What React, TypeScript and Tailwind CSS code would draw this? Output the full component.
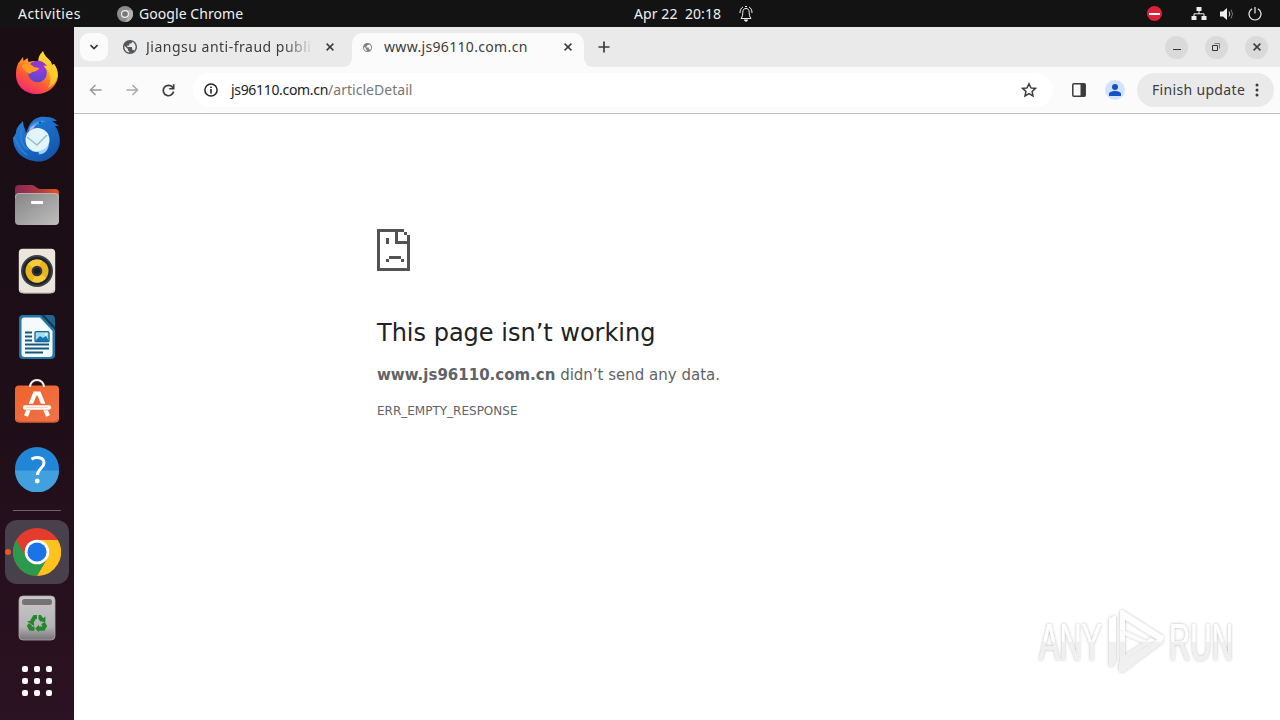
import type { ReactNode } from "react";

const Globe = ({ size }: { size: number }) => (
  <svg width={size} height={size} viewBox="2 2 20 20" fill="#54575a">
    <path d="M12 2C6.48 2 2 6.48 2 12s4.48 10 10 10 10-4.48 10-10S17.52 2 12 2ZM4 12c0-.6.07-1.200.2-1.800L9 15v1c0 1.100.9 2 2 2v1.930C7.060 19.440 4 16.080 4 12Zm13.890 5.400c-.26-.81-1-1.400-1.900-1.400h-1v-3c0-.55-.45-1-1-1h-6v-2h2c.55 0 1-.45 1-1V7h2c1.100 0 2-.9 2-2v-.41C17.920 5.770 20 8.650 20 12c0 2.080-.8 3.970-2.110 5.400Z" />
    <path d="M4.300 9 8 6l4-3 3 1.500L13 7h-2v3H8.500v2H14l1.500 4-3.500 1-5-4Z" opacity=".25" />
  </svg>
);

const Cross = ({ size = 8 }: { size?: number }) => (
  <svg width={size} height={size} viewBox="0 0 8 8"><path d="m.6.6 6.8 6.8M7.4.6.6 7.4" stroke="#3c3c3c" strokeWidth="1.5" /></svg>
);

const Slot = ({ children }: { children: ReactNode }) => (
  <div className="flex h-16 w-16 shrink-0 items-center justify-center">{children}</div>
);

const Firefox = () => (
  <svg width="48" height="48" viewBox="0 0 48 48">
    <defs>
      <linearGradient id="ff1" x1=".85" y1="0" x2=".25" y2="1"><stop stopColor="#fff044" /><stop offset=".35" stopColor="#ffb01f" /><stop offset=".65" stopColor="#ff602e" /><stop offset="1" stopColor="#f52478" /></linearGradient>
      <radialGradient id="ff2" cx=".6" cy=".2" r=".8"><stop stopColor="#a139df" /><stop offset="1" stopColor="#5648cf" /></radialGradient>
    </defs>
    <path d="M7 12 10 8l.5 4 4-3 1 4 5-1 5 0C25 6 29 4 30 2c1 5 5 7 8 11l1 3 2-1c3 4 4 8 4 12C44 38 34 45 24 45 12 45 3 37 3 26c0-6 1-11 4-14Z" fill="url(#ff1)" />
    <path d="M30 2c1 5 5 7 8 11l1 3 2-1c3 4 4 8 3 14-2 5-5 8-9 10 4-7 3-16-3-21-3-3-6-4-6.500-7C26 7 29 4 30 2Z" fill="#ffd52f" opacity=".75" />
    <circle cx="24.500" cy="24" r="9.300" fill="url(#ff2)" />
    <path d="M17 15c5-5 13-4 17 2-4-1-7 0-10 3Z" fill="#9237cd" />
    <path d="M9 16c5-2 9-1 12 2l5 1c-1 4-7 3-9 6-3-2-8-4-8-9Z" fill="#ff9b25" />
  </svg>
);

const Thunderbird = () => (
  <svg width="50" height="50" viewBox="0 0 50 50">
    <defs><linearGradient id="tb" x1="0" y1="0" x2=".7" y2="1"><stop stopColor="#2a85df" /><stop offset=".6" stopColor="#1769c4" /><stop offset="1" stopColor="#1554ab" /></linearGradient></defs>
    <path d="M17 12C21 4 28 2 34 3c6 0 9 2 11 4l-5 0 7 5-4 0c5 7 7 17 2 25C39 46 29 49 22 47 8 45 1 35 1 24l3-5c0-5 3-8 7-12 0 5 2 7 3 12Z" fill="url(#tb)" />
    <path d="M17 14c4-6 10-8 17-7-7 2-14 6-17 12Z" fill="#3d98e7" />
    <path d="M2 23c3 5 5 13 13 18M10 14c-3 9 0 18 6 22" fill="none" stroke="#2b7ed2" strokeWidth="2" />
    <circle cx="25.500" cy="26" r="12" fill="#e3f5fc" />
    <path d="m15 23 10 8 10-10" fill="none" stroke="#98bdcd" strokeWidth="1.600" />
    <path d="M21 37c8 1 14-2 16-7-1 8-6 11-11 10 3-1 1-2-5-3" fill="#9bd5f7" />
    <path d="m17 17 2-4 5-3-3 5Z" fill="#c5aae8" /><circle cx="28" cy="8.500" r="1.100" fill="#123b7b" />
  </svg>
);

const Files = () => (
  <svg width="46" height="42" viewBox="0 0 46 42">
    <defs>
      <linearGradient id="fl1"><stop stopColor="#872851" /><stop offset=".5" stopColor="#a93744" /><stop offset="1" stopColor="#e95420" /></linearGradient>
      <linearGradient id="fl2" x1="0" y1="0" x2="1" y2="1"><stop stopColor="#858585" /><stop offset="1" stopColor="#bebebe" /></linearGradient>
    </defs>
    <path d="M1 15V5q0-4 4-4h13q2 0 4 2t4 2h15q4 0 4 4v9Z" fill="url(#fl1)" />
    <rect x="1" y="9" width="44" height="32" rx="4" fill="url(#fl2)" />
    <path d="M1.500 14q0-4.500 4-4.500h35q4 0 4 4.500" fill="none" stroke="#bcbcbc" strokeWidth=".8" />
    <rect x="17" y="17" width="12" height="3" rx=".7" fill="#fff" />
  </svg>
);

const Rhythmbox = () => (
  <svg width="38" height="46" viewBox="0 0 38 46">
    <rect x=".8" y=".8" width="36.400" height="44.400" rx="4" fill="#eae6dc" /><path d="M2 42q1 3 4 3h26q3 0 4-3" fill="none" stroke="#bdb8ac" />
    <circle cx="19" cy="23" r="16" fill="#3b3f46" /><circle cx="19" cy="23" r="14" fill="#1f242b" />
    <circle cx="19" cy="23" r="11.500" fill="#e9b51d" /><path d="M19 23 10 16a11.500 11.500 0 0 1 14-3.500ZM19 23l9 7a11.500 11.500 0 0 1-14 3.500Z" fill="#f5cb37" />
    <circle cx="19" cy="23" r="5.300" fill="#30363e" /><circle cx="19" cy="23" r="3" fill="#171d23" />
  </svg>
);

const Writer = () => (
  <svg width="38" height="46" viewBox="0 0 38 46">
    <path d="M5 1h20l12 12v28q0 4-4 4H5q-4 0-4-4V5q0-4 4-4" fill="#1f78a5" />
    <path d="M6 3.500h16L34.500 17v23q0 3-3 3H6.500q-3 0-3-3V6.500q0-3 2.500-3" fill="#f5fafd" />
    <path d="M25 1h8q4 0 4 4v8Z" fill="#226591" /><path d="M23 1 37 16v-3L26 1Z" fill="#103a54" />
    <path d="M7 18.500h7M7 22.500h7M7 26.500h7M7 30.500h24M7 34.500h24M7 38.500h18" stroke="#14597d" strokeWidth="1.800" />
    <rect x="17" y="17.700" width="14" height="10" rx="1" fill="#a8dcf5" stroke="#14658f" strokeWidth="1.300" /><path d="m18 26 4-4 3 2 3-2 2.500 4v1H18Z" fill="#1577b2" /><circle cx="28" cy="20.400" r="1" fill="#fff" />
  </svg>
);

const Software = () => (
  <svg width="46" height="46" viewBox="0 0 46 46">
    <defs><linearGradient id="sw" x1="0" y1="0" x2="1" y2="1"><stop stopColor="#f0622d" /><stop offset="1" stopColor="#ee7448" /></linearGradient></defs>
    <rect x="1" y="7.500" width="44" height="37" rx="4" fill="url(#sw)" /><path d="M2 41q1 3 4 3h34q3 0 4-3" stroke="#c95832" fill="none" />
    <path d="M16 9a7 7 0 0 1 14 0" fill="none" stroke="#fff1e9" strokeWidth="2" />
    <path d="M12 38 21 15.500h4L34 38" fill="none" stroke="#fff" strokeWidth="4.200" />
    <path d="M12 29h22" stroke="#f0693a" strokeWidth="6.500" /><path d="M11 29.500h24" stroke="#fff" strokeWidth="4.300" strokeLinecap="round" />
    <path d="M12 29.300h22" stroke="#f3b69d" strokeWidth=".7" />
  </svg>
);

const Help = () => (
  <svg width="46" height="46" viewBox="0 0 46 46">
    <circle cx="23" cy="23" r="22" fill="#2186d5" /><path d="M1 24.500h44A22 22 0 0 1 1 24.500" fill="#42a0df" />
    <path d="M17.500 13.200c4-2.600 12.500-2.600 12.500 3.800 0 5-6.600 5.700-6.600 12" fill="none" stroke="#fff" strokeWidth="3" /><circle cx="23.200" cy="35" r="2.400" fill="#fff" />
  </svg>
);

const Chrome = () => (
  <svg width="48" height="48" viewBox="0 0 48 48">
    <circle cx="24" cy="24" r="24" fill="#e33b2e" />
    <path d="M24 12h20.800A24 24 0 0 1 24 48l10.400-18Z" fill="#fcc31e" />
    <path d="M3.200 12A24 24 0 0 0 24 48l10.400-18A12 12 0 0 1 13.600 30Z" fill="#2b9a4b" />
    <circle cx="24" cy="24" r="12.300" fill="#fff" /><circle cx="24" cy="24" r="9.600" fill="#1a73e8" />
  </svg>
);

const Trash = () => (
  <svg width="38" height="46" viewBox="0 0 38 46">
    <defs><linearGradient id="tr" x1="0" y1="0" x2="0" y2="1"><stop stopColor="#c9c8c9" /><stop offset=".7" stopColor="#b5b3b5" /><stop offset="1" stopColor="#777378" /></linearGradient></defs>
    <rect x="1" y="1" width="36" height="44" rx="4" fill="url(#tr)" stroke="#aaa7aa" strokeWidth=".8" />
    <rect x="4" y="4" width="30" height="6" rx="2.500" fill="#757376" />
    <g fill="none" stroke="#26862e" strokeWidth="4.200"><path d="m14 26.500 2.700-4.500h2.300" /><path d="M20.500 22h1.300l2.400 3.500" /><path d="m25 28 1.700 3-1.500 2.700H21" /><path d="M16.500 33.700h-3.800L11.300 31l1-1.800" /></g>
    <path d="m27.500 21.500-.2 6-5.800-1.800ZM21 29.800v7.400l-3.800-3.600ZM9 26.500l6.800-1.500.3 6Z" fill="#26862e" />
  </svg>
);

const Dock = () => (
  <nav className="flex w-[74px] shrink-0 flex-col items-center bg-linear-to-b from-[#1a0d13] via-[#1d0e17] to-[#2c1222] pt-3.5">
    <div className="flex flex-col gap-0.5">
      <Slot><div className="pb-px"><Firefox /></div></Slot><Slot><Thunderbird /></Slot><Slot><Files /></Slot><Slot><Rhythmbox /></Slot><Slot><Writer /></Slot>
      <Slot><div className="pb-1"><Software /></div></Slot><Slot><div className="pb-px"><Help /></div></Slot>
    </div>
    <div className="mt-[9px] h-px w-12 bg-[#6b6068]" />
    <div className="relative mt-[9px] rounded-xl bg-[#48404a]">
      <Slot><Chrome /></Slot>
      <i className="absolute top-[29px] left-0 h-1.5 w-1.5 rounded-full bg-[#ea542a]" />
    </div>
    <div className="mt-0.5"><Slot><Trash /></Slot></div>
    <div className="mt-4 grid grid-cols-3 gap-1.5">
      {Array.from({ length: 9 }, (_, i) => <i key={i} className="h-1.5 w-1.5 rounded-[2px] bg-white" />)}
    </div>
  </nav>
);

const TopBar = () => (
  <header className="flex h-[27px] shrink-0 items-center bg-[#131313] text-[14px] leading-none text-[#f0f0f0]">
    <span className="ml-[18px] w-[99px] tracking-[0.45px]">Activities</span>
    <svg width="16" height="16" viewBox="0 0 16 16"><circle cx="8" cy="8" r="8" fill="#8c8c8c" /><path d="M8 4h7a8 8 0 0 1-7 12l4-6Z" fill="#b0b0b0" /><circle cx="8" cy="8" r="4" fill="#efefef" /><circle cx="8" cy="8" r="2.800" fill="#777" /></svg>
    <span className="ml-1.5 w-[495px] tracking-[0.06px]">Google Chrome</span>
    <span className="w-[104px] tracking-[0.08px] whitespace-pre">Apr 22  20:18</span>
    <svg width="16" height="18" viewBox="0 0 16 18" fill="none" stroke="#f1f1f1" strokeWidth="1"><path d="M3 13.500h10c-1.800-2-1.500-4-1.800-6.300C11 4.200 9.800 3.500 8 3.500S5 4.200 4.800 7.200C4.500 9.500 4.800 11.500 3 13.500Z" /><path d="M2 8c0-3 1-5 3-6M14 8c0-3-1-5-3-6M7 1.500h2" /><path d="M6.300 15h3.400L8 16.500Z" fill="#fff" /></svg>
    <div className="ml-auto mr-[18px] flex items-center">
      <span className="mr-[29px] flex h-[15px] w-[15px] items-center justify-center rounded-full bg-[#e01f38]"><i className="h-[2px] w-[11px] bg-white" /></span>
      <svg width="16" height="14" viewBox="0 0 16 14" fill="#eee"><path d="M5.500 0h5v4h-5ZM.5 9h5v4h-5ZM10.500 9h5v4h-5Z" /><path d="M8 4v3M3 9V6.800h10V9" fill="none" stroke="#eee" /></svg>
      <svg className="ml-[13px]" width="15" height="14" viewBox="0 0 15 14" fill="none"><path d="M0 4.500h3L7 1v12L3 9.500H0Z" fill="#eee" /><path d="M9 4.500q1.600 2.500 0 5" stroke="#ddd" /><path d="M11 2.500q3 4.500 0 9" stroke="#777" /></svg>
      <svg className="ml-[13px]" width="14" height="14" viewBox="0 0 14 14" fill="none" stroke="#eee" strokeWidth="1.200"><path d="M4.200 1.700a6 6 0 1 0 5.600 0M7 0v6.500" /></svg>
    </div>
  </header>
);

const Round = ({ children }: { children: ReactNode }) => <span className="flex h-[23px] w-[23px] items-center justify-center rounded-full bg-[#dadada]">{children}</span>;

const Tabs = () => (
  <div className="flex h-10 bg-[#eaeaea] text-[14px] leading-none text-[#3c3c3c]">
    <div className="ml-1.5 mt-[6px] flex h-7 w-7 items-center justify-center rounded-[9px] bg-[#fbfbfb]"><svg width="8" height="6" viewBox="0 0 8 6"><path d="m.5 1 3.500 3.500L7.500 1" fill="none" stroke="#333" strokeWidth="1.600" /></svg></div>
    <div className="ml-[15px] flex w-[219px] items-center">
      <Globe size={14} />
      <span className="ml-[9px] w-[168px] overflow-hidden py-1 tracking-[0.5px] whitespace-nowrap mask-[linear-gradient(90deg,black_82%,transparent)]">Jiangsu anti-fraud publi</span>
      <span className="ml-[12px]"><Cross /></span>
    </div>
    <div className="flex flex-1">
      <svg className="mt-auto" width="10" height="10"><path d="M10 0v10H0Q10 10 10 0" fill="#fbfbfb" /></svg>
      <div className="mt-[6px] flex w-[232px] items-center rounded-t-[10px] bg-[#fbfbfb] pb-[6px] pl-[11px]">
        <span className="flex opacity-75"><Globe size={9} /></span>
        <span className="ml-3 w-[180px] tracking-[0.33px]">www.js96110.com.cn</span><Cross />
      </div>
      <svg className="mt-auto" width="10" height="10"><path d="M0 0v10h10Q0 10 0 0" fill="#fbfbfb" /></svg>
      <svg className="ml-1 self-center" width="12" height="12"><path d="M6 .5v11M.5 6h11" stroke="#3c3c3c" strokeWidth="1.700" /></svg>
    </div>
    <div className="mr-3 flex items-center gap-[17px]">
      <Round><i className="mt-1 h-px w-2 bg-[#333]" /></Round>
      <Round><svg width="9" height="9" viewBox="0 0 9 9" fill="none" stroke="#333"><path d="M.5 2.500h5v5h-5Z" /><path d="M2.500.5h5v5" stroke="#777" /></svg></Round>
      <Round><Cross size={8} /></Round>
    </div>
  </div>
);

const Toolbar = () => (
  <div className="flex h-[47px] items-center border-b border-[#bfc0bf] bg-[#fbfbfb] text-[14px] leading-none">
    <svg className="ml-[15px]" width="13" height="12" viewBox="0 0 13 12" fill="none" stroke="#999" strokeWidth="1.500"><path d="M12.500 6H1.500M6.500 1 1.500 6l5 5" /></svg>
    <svg className="ml-[24px]" width="13" height="12" viewBox="0 0 13 12" fill="none" stroke="#aaa" strokeWidth="1.500"><path d="M.5 6h11M6.500 1l5 5-5 5" /></svg>
    <svg className="ml-[23px]" width="13" height="13" viewBox="0 0 13 13"><path d="M11.600 7.500A5.200 5.200 0 1 1 10.300 3l1 1" fill="none" stroke="#3c3c3c" strokeWidth="1.700" /><path d="M12.500.3v5.300H7.200V4h3.600V.3Z" fill="#3c3c3c" /></svg>
    <div className="ml-[18px] flex h-[34px] w-[860px] items-center rounded-full bg-white pl-[11px]">
      <svg width="14" height="14" viewBox="0 0 14 14"><circle cx="7" cy="7" r="6.100" fill="none" stroke="#252525" strokeWidth="1.500" /><path d="M7 6v4.500M7 3.500V5" stroke="#252525" strokeWidth="1.600" /></svg>
      <span className="ml-[13px] flex-1 tracking-[-0.32px] text-[#202124]">js96110.com.cn<span className="tracking-[0.03px] text-[#777]">/articleDetail</span></span>
      <svg className="mr-4" width="16" height="16" viewBox="0 0 16 16"><path d="m8 1.800 1.900 4.100 4.500.5-3.300 3.100.9 4.500-4-2.300L4 14l.9-4.500-3.300-3.100 4.500-.5Z" fill="none" stroke="#3c3c3c" strokeWidth="1.500" /></svg>
    </div>
    <svg className="ml-[19px]" width="14" height="14" viewBox="0 0 14 14"><rect x=".8" y=".8" width="12.400" height="12.400" rx="1" fill="none" stroke="#3c3c3c" strokeWidth="1.500" /><path d="M8.500 1H13v12H8.500Z" fill="#3c3c3c" /></svg>
    <svg className="ml-[19px]" width="20" height="20" viewBox="0 0 20 20"><circle cx="10" cy="10" r="10" fill="#d3e3fd" /><circle cx="10" cy="7" r="3" fill="#1450c8" /><path d="M4 16v-2c0-4 12-4 12 0v2Z" fill="#1450c8" /></svg>
    <div className="ml-3 flex h-[34px] w-[137px] items-center rounded-full bg-[#eaeaea] pl-[15px] text-[#3c3c3c]">
      <span className="w-[103px] tracking-[0.33px] whitespace-nowrap">Finish update</span>
      <svg width="4" height="14" viewBox="0 0 4 14" fill="#3c3c3c"><circle cx="2" cy="2" r="1.500" /><circle cx="2" cy="7" r="1.500" /><circle cx="2" cy="12" r="1.500" /></svg>
    </div>
  </div>
);

const Watermark = () => (
  <svg className="absolute right-[18px] bottom-[39px]" width="232" height="76" viewBox="1030 604 232 76">
    <defs>
      <linearGradient id="wm" x1="0" y1="622" x2="0" y2="660" gradientUnits="userSpaceOnUse"><stop offset=".48" stopColor="#fff" /><stop offset=".5" stopColor="#f0f0f0" /></linearGradient>
      <filter id="sh" x="-20%" y="-20%" width="140%" height="140%"><feDropShadow dx="0" dy="0" stdDeviation="1.500" floodColor="#000" floodOpacity=".3" /></filter>
    </defs>
    <g filter="url(#sh)" fill="url(#wm)">
      <text x="1039" y="659" textLength="63" lengthAdjust="spacingAndGlyphs" fontSize="52" fontFamily="Liberation Sans, sans-serif">ANY</text>
      <text x="1169" y="659" textLength="64" lengthAdjust="spacingAndGlyphs" fontSize="52" fontFamily="Liberation Sans, sans-serif">RUN</text>
      <path d="M1120 610.500q0-2 2-1.500l41 26q1.500 1.500 0 3.500l-3 2-35-22v12l-5-2Z" />
      <path d="m1125 630 28 13-3 2-25-11v21l-5 3v-29Z" opacity=".9" />
      <path d="m1163 641-40 30-4-1v-8l41-25ZM1109 618l7-4v46l-5 6-2-2Z" />
      <path d="m1120 657 31-20 4 2-35 23Z" />
    </g>
  </svg>
);

const SadPage = () => (
  <svg width="33" height="42" viewBox="0 0 11 14" shapeRendering="crispEdges" fill="#535353"><path d="M0 0h9v1H7v3h4v10H0Zm1 1v12h9V5H6V1ZM9 1h1v1H9Zm1 1h1v2h-1ZM3 3h1v2H3Zm1 6h4v1H4ZM3 10h1v1H3Zm5 0h1v1H8Z" fillRule="evenodd" /></svg>
);

export default function App() {
  return (
    <div className="flex h-[720px] w-[1280px] flex-col overflow-hidden bg-white font-['Noto_Sans',sans-serif]">
      <TopBar />
      <div className="flex min-h-0 flex-1">
        <Dock />
        <div className="flex min-w-0 flex-1 flex-col">
          <Tabs />
          <Toolbar />
          <main className="relative flex flex-1 flex-col pl-[303px] pt-[115px] font-['DejaVu_Sans',sans-serif] text-[#5f6368]">
            <SadPage />
            <h1 className="mt-[47px] text-[24px] leading-[30px] text-[#202124]">This page isn’t working</h1>
            <p className="mt-[15px] text-[15px] leading-6"><b>www.js96110.com.cn</b> didn’t send any data.</p>
            <p className="mt-[15px] text-[12px] leading-[18px]">ERR_EMPTY_RESPONSE</p>
            <Watermark />
          </main>
        </div>
      </div>
    </div>
  );
}
